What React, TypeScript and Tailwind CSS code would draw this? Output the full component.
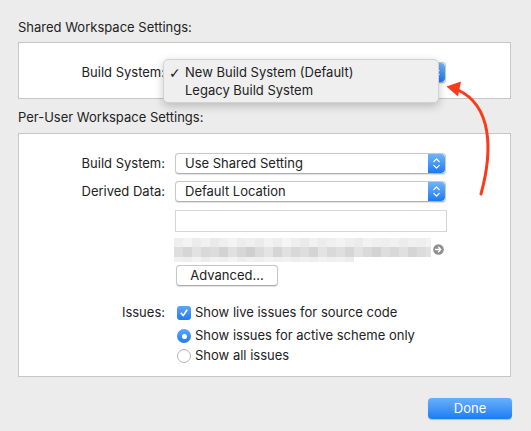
import React from "react";

const tileShades = [
  ["#efefef", "#f3f3f3", "#ececec", "#f1f1f1", "#eaeaea", "#efefef", "#f4f4f4", "#ededed", "#f0f0f0", "#ebebeb", "#f2f2f2", "#eeeeee", "#f5f5f5", "#efefef", "#eaeaea", "#f1f1f1", "#ececec", "#f0f0f0", "#f3f3f3", "#eeeeee", "#ebebeb", "#f2f2f2", "#efefef", "#eeeeee", "#f1f1f1", "#ececec", "#f0f0f0", "#eeeeee", "#f2f2f2"],
  ["#dedede", "#d6d6d6", "#e2e2e2", "#d9d9d9", "#dcdcdc", "#d3d3d3", "#e0e0e0", "#d7d7d7", "#cfcfcf", "#dbdbdb", "#e4e4e4", "#d5d5d5", "#e1e1e1", "#d8d8d8", "#dddddd", "#d4d4d4", "#e3e3e3", "#d9d9d9", "#dfdfdf", "#d6d6d6", "#e2e2e2", "#dadada", "#d3d3d3", "#dedede", "#d8d8d8", "#e0e0e0", "#d5d5d5", "#dcdcdc", "#e1e1e1"],
  ["#f0f0f0", "#eeeeee", "#f2f2f2", "#ececec", "#f1f1f1", "#efefef", "#f3f3f3", "#ededed", "#f0f0f0", "#eeeeee", "#f2f2f2", "#efefef", "#f1f1f1", "#ededed", "#f0f0f0", "#eeeeee", "#f2f2f2", "#efefef", "#f1f1f1", "#ededed"],
];

function Stepper() {
  return (
    <div className="w-[17px] h-full rounded-r-[4px] bg-gradient-to-b from-[#6db4fb] to-[#1a79f3] flex items-center justify-center">
      <svg width="9" height="13" viewBox="0 0 9 13" fill="none" stroke="white" strokeWidth="1.3" strokeLinecap="round" strokeLinejoin="round">
        <path d="M1.8 4.6 L4.5 1.9 L7.2 4.6" />
        <path d="M1.8 8.4 L4.5 11.1 L7.2 8.4" />
      </svg>
    </div>
  );
}

function PopUp({ value }: { value: string }) {
  return (
    <div className="w-[271px] h-[21px] flex bg-white rounded-[4px] border border-[#c9c9c9] border-b-[#b0b0b0] shadow-[0_0.5px_1px_rgba(0,0,0,0.12)] overflow-hidden">
      <div className="flex-1 pl-[9px] flex items-center leading-none">{value}</div>
      <Stepper />
    </div>
  );
}

function PathMosaic() {
  const rowY = [0, 9, 19];
  const rowH = [9, 10, 5];
  return (
    <svg width="257" height="24" viewBox="0 0 257 24" className="block">
      {tileShades.map((row, r) =>
        row.map((c, i) => (
          <rect key={`${r}-${i}`} x={i * 9} y={rowY[r]} width={9} height={rowH[r]} fill={c} />
        ))
      )}
    </svg>
  );
}

function RevealIcon() {
  return (
    <svg width="11" height="11" viewBox="0 0 11 11">
      <circle cx="5.5" cy="5.5" r="5.3" fill="#8f8f8f" />
      <path d="M2.6 5.5 H7.6 M5.6 3.3 L7.8 5.5 L5.6 7.7" stroke="white" strokeWidth="1.4" fill="none" strokeLinecap="round" strokeLinejoin="round" />
    </svg>
  );
}

export default function App() {
  return (
    <div className="w-[531px] h-[431px] bg-[#ececec] relative overflow-hidden text-[13px] text-[#222222] font-['Inter','Liberation_Sans',sans-serif] antialiased">
      <div className="flex flex-col pl-[18px] pr-[20px] pt-[19px]">
        <div className="h-4 leading-4">Shared Workspace Settings:</div>

        <div className="mt-[7px] h-[57px] border border-[#c6c6c6] bg-white flex pt-[19px]">
          <div className="w-[146px] text-right h-[21px] leading-[21px]">Build System:</div>
          <div className="ml-[10px]">
            <PopUp value="New Build System (Default)" />
          </div>
        </div>

        <div className="mt-[10px] h-4 leading-4">Per-User Workspace Settings:</div>

        <div className="mt-[8px] h-[244px] border border-[#c6c6c6] bg-white flex flex-col pt-[19px]">
          <div className="flex h-[21px] items-center">
            <div className="w-[146px] text-right">Build System:</div>
            <div className="ml-[10px]">
              <PopUp value="Use Shared Setting" />
            </div>
          </div>
          <div className="flex h-[21px] items-center mt-[7px]">
            <div className="w-[146px] text-right">Derived Data:</div>
            <div className="ml-[10px]">
              <PopUp value="Default Location" />
            </div>
          </div>
          <div className="flex mt-[8px]">
            <div className="w-[146px]" />
            <div className="ml-[10px] w-[272px] h-[22px] border border-[#d6d6d6] bg-white" />
          </div>
          <div className="flex mt-[6px] items-center">
            <div className="w-[145px]" />
            <div className="ml-[10px] blur-[0.4px]">
              <PathMosaic />
            </div>
            <div className="ml-[2px] mt-[-1px]">
              <RevealIcon />
            </div>
          </div>
          <div className="flex mt-[3px]">
            <div className="w-[147px]" />
            <button className="ml-[10px] w-[102px] h-[21px] rounded-[4px] bg-white border border-[#c6c6c6] border-b-[#acacac] shadow-[0_0.5px_1px_rgba(0,0,0,0.12)] leading-none text-[13px] text-[#222222]">
              Advanced...
            </button>
          </div>
          <div className="flex mt-[17px] h-[20px] items-center">
            <div className="w-[146px] text-right">Issues:</div>
            <div className="ml-[12px] w-[14px] h-[14px] rounded-[3px] bg-gradient-to-b from-[#5aa6fa] to-[#1f7bf2] flex items-center justify-center">
              <svg width="10" height="10" viewBox="0 0 10 10" fill="none" stroke="white" strokeWidth="1.6" strokeLinecap="round" strokeLinejoin="round">
                <path d="M2.2 5.3 L4.2 7.6 L7.8 2.2" />
              </svg>
            </div>
            <span className="ml-[4px]">Show live issues for source code</span>
          </div>
          <div className="flex mt-[3px] h-[20px] items-center">
            <div className="w-[146px]" />
            <div className="ml-[12px] w-[14px] h-[14px] rounded-full bg-gradient-to-b from-[#5aa6fa] to-[#1f7bf2] flex items-center justify-center">
              <div className="w-[5px] h-[5px] rounded-full bg-white" />
            </div>
            <span className="ml-[4px]">Show issues for active scheme only</span>
          </div>
          <div className="flex h-[20px] items-center">
            <div className="w-[146px]" />
            <div className="ml-[12px] w-[14px] h-[14px] rounded-full bg-white border border-[#b5b5b5] shadow-[inset_0_1px_1px_rgba(0,0,0,0.05)]" />
            <span className="ml-[4px]">Show all issues</span>
          </div>
        </div>

        <div className="flex justify-end mt-[21px] mr-[-1px]">
          <button className="w-[84px] h-[21px] rounded-[4px] bg-gradient-to-b from-[#67b0fb] to-[#1b7bf4] text-white text-[13px] leading-none shadow-[0_0.5px_1px_rgba(0,0,0,0.2)]">
            Done
          </button>
        </div>
      </div>

      {/* open pop-up menu for the shared build system */}
      <div className="absolute left-[163px] top-[59px] w-[276px] h-[44px] rounded-[5px] bg-[#efefef] border border-[#d2d2d2] shadow-[0_3px_10px_rgba(0,0,0,0.22)] pt-[4px]">
        <div className="flex h-[18px] items-center">
          <span className="w-[21px] pl-[5px] text-[14px] font-semibold leading-none font-['DejaVu_Sans',sans-serif]">✓</span>
          <span>New Build System (Default)</span>
        </div>
        <div className="flex h-[18px] items-center">
          <span className="w-[21px]" />
          <span>Legacy Build System</span>
        </div>
      </div>

      {/* callout arrow */}
      <svg className="absolute inset-0 pointer-events-none" width="531" height="431" viewBox="0 0 531 431">
        <path d="M481 194 C 493 150, 492 106, 458 90" stroke="#fb3a1c" strokeWidth="3" fill="none" strokeLinecap="round" />
        <polygon points="446.5,86.5 461,81.5 458,96.5" fill="#fb3a1c" />
      </svg>
    </div>
  );
}
